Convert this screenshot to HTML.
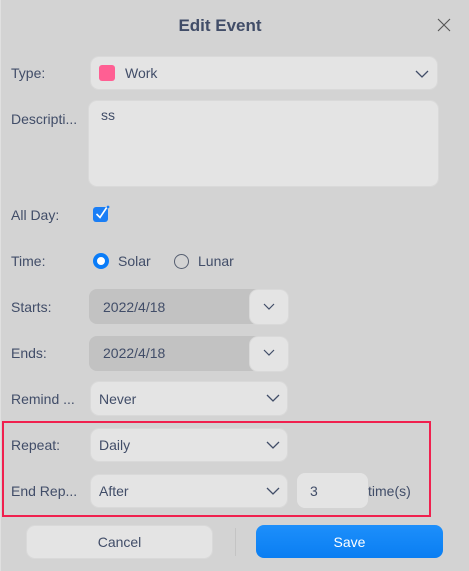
<!DOCTYPE html>
<html><head><meta charset="utf-8"><style>
*{box-sizing:border-box;margin:0;padding:0}
body{width:469px;height:571px;background:#d3d3d3;font-family:"Liberation Sans","DejaVu Sans",sans-serif;color:#414d68;font-size:14px;position:relative;overflow:hidden}
.a{position:absolute}
.lbl{position:absolute;left:11px;font-size:14px;line-height:16px}
.box{position:absolute;background:#e4e4e4;border-radius:8px;box-shadow:0 0 0 1px #d9d9d9}
.txt{position:absolute;line-height:16px}
.chev{position:absolute;width:14px;height:8px}
</style></head><body>
<div class="a" style="left:0;top:0;width:1px;height:571px;background:#e0e0e0"></div>
<div class="a" style="left:0;width:440px;top:16px;text-align:center;font-size:17px;font-weight:bold;line-height:20px;color:#414d68">Edit Event</div>
<svg class="a" style="left:437px;top:18px" width="14" height="14"><path d="M1 1L13 13M13 1L1 13" stroke="#555" stroke-width="1.1"/></svg>

<div class="lbl" style="top:65px">Type:</div>
<div class="box" style="left:91px;top:57px;width:346px;height:32px"></div>
<div class="a" style="left:99px;top:65px;width:16px;height:16px;border-radius:3px;background:#ff5f93"></div>
<div class="txt" style="left:125px;top:65px">Work</div>
<svg class="chev" style="left:415px;top:70px"><path d="M1 1L7 7L13 1" fill="none" stroke="#414d68" stroke-width="1.3"/></svg>

<div class="lbl" style="top:111px">Descripti...</div>
<div class="box" style="left:89px;top:101px;width:349px;height:85px"></div>
<div class="txt" style="left:101px;top:107px">ss</div>

<div class="lbl" style="top:207px">All Day:</div>
<div class="a" style="left:93px;top:207px;width:15px;height:15px;border-radius:3px;background:#1a7ef5"></div>
<svg class="a" style="left:93px;top:204px" width="18" height="18"><path d="M3.5 10L7 13.5L14 3" fill="none" stroke="#fff" stroke-width="1.6"/><circle cx="15" cy="3" r="1.4" fill="#1a7ef5"/></svg>

<div class="lbl" style="top:253px">Time:</div>
<div class="a" style="left:93px;top:253px;width:16px;height:16px;border-radius:50%;background:#fff;border:4px solid #0a7cf8"></div>
<div class="txt" style="left:118px;top:253px">Solar</div>
<div class="a" style="left:174px;top:254px;width:15px;height:15px;border-radius:50%;border:1.2px solid #555e70"></div>
<div class="txt" style="left:198px;top:253px">Lunar</div>

<div class="lbl" style="top:299px">Starts:</div>
<div class="a" style="left:89px;top:289px;width:199px;height:35px;background:#c2c2c2;border-radius:8px"></div>
<div class="box" style="left:250px;top:290px;width:38px;height:34px"></div>
<div class="txt" style="left:103px;top:299px">2022/4/18</div>
<svg class="chev" style="left:262px;top:303px"><path d="M2 1L7 6L12 1" fill="none" stroke="#414d68" stroke-width="1.2"/></svg>

<div class="lbl" style="top:345px">Ends:</div>
<div class="a" style="left:89px;top:336px;width:199px;height:35px;background:#c2c2c2;border-radius:8px"></div>
<div class="box" style="left:250px;top:337px;width:38px;height:34px"></div>
<div class="txt" style="left:103px;top:345px">2022/4/18</div>
<svg class="chev" style="left:262px;top:349px"><path d="M2 1L7 6L12 1" fill="none" stroke="#414d68" stroke-width="1.2"/></svg>

<div class="lbl" style="top:391px">Remind ...</div>
<div class="box" style="left:91px;top:382px;width:196px;height:33px"></div>
<div class="txt" style="left:99px;top:391px">Never</div>
<svg class="chev" style="left:266px;top:394px"><path d="M1 1L7 7L13 1" fill="none" stroke="#414d68" stroke-width="1.3"/></svg>

<div class="a" style="left:2px;top:421px;width:429px;height:96px;border:2px solid #f0204e"></div>

<div class="lbl" style="top:437px">Repeat:</div>
<div class="box" style="left:91px;top:429px;width:196px;height:32px"></div>
<div class="txt" style="left:99px;top:437px">Daily</div>
<svg class="chev" style="left:266px;top:441px"><path d="M1 1L7 7L13 1" fill="none" stroke="#414d68" stroke-width="1.3"/></svg>

<div class="lbl" style="top:483px">End Rep...</div>
<div class="box" style="left:91px;top:475px;width:196px;height:32px"></div>
<div class="txt" style="left:99px;top:483px">After</div>
<svg class="chev" style="left:266px;top:487px"><path d="M1 1L7 7L13 1" fill="none" stroke="#414d68" stroke-width="1.3"/></svg>
<div class="a" style="left:297px;top:473px;width:71px;height:35px;background:#e4e4e4;border-radius:8px"></div>
<div class="txt" style="left:310px;top:483px">3</div>
<div class="txt" style="left:368px;top:483px">time(s)</div>

<div class="box" style="left:27px;top:526px;width:185px;height:32px"></div>
<div class="txt" style="left:27px;width:185px;text-align:center;top:534px">Cancel</div>
<div class="a" style="left:235px;top:528px;width:1px;height:28px;background:#c4c4c4"></div>
<div class="a" style="left:256px;top:525px;width:187px;height:33px;border-radius:8px;background:linear-gradient(#1d8ffb,#0a7ef2)"></div>
<div class="txt" style="left:256px;width:187px;text-align:center;top:534px;color:#fff">Save</div>
</body></html>
